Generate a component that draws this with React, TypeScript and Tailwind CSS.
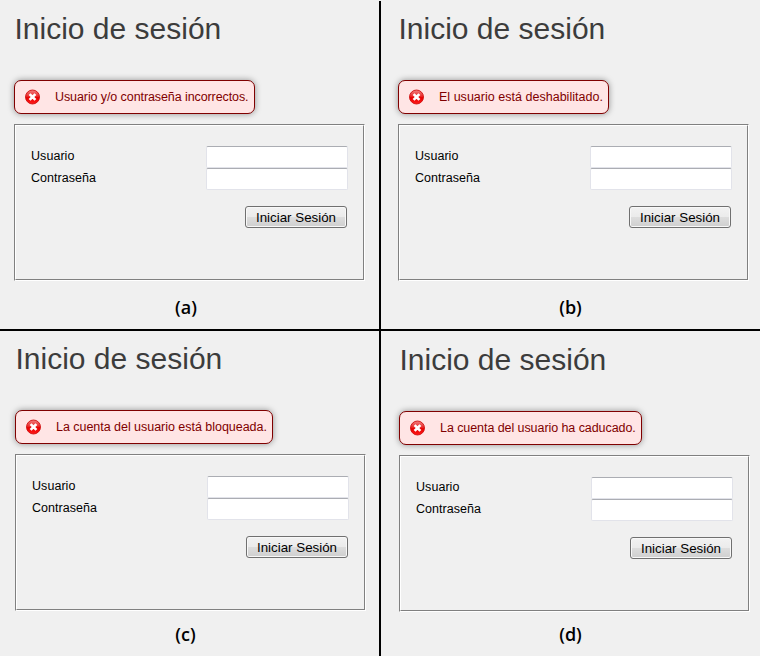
type PanelProps = {
  message: string;
  caption: string;
  alertWidth: string;
  spacing: string;
  offset: string;
  captionOffset: string;
};

function ErrorIcon() {
  return (
    <svg width="16" height="16" viewBox="0 0 16 16" className="shrink-0">
      <defs>
        <linearGradient id="ball" x1="0" y1="0" x2="0" y2="1">
          <stop offset="0" stopColor="#f08080" />
          <stop offset="0.45" stopColor="#ea2a2a" />
          <stop offset="0.55" stopColor="#e80000" />
          <stop offset="1" stopColor="#ff1c1c" />
        </linearGradient>
      </defs>
      <circle cx="7.5" cy="8" r="7" fill="url(#ball)" stroke="#d01010" strokeWidth="0.9" />
      <path d="M4.6 5.1l5.8 5.8M10.4 5.1l-5.8 5.8" stroke="#fff" strokeWidth="2.7" />
    </svg>
  );
}

function Field({ label }: { label: string }) {
  return (
    <label className="flex h-[22px] items-center justify-between text-[12.5px] leading-[22px] tracking-[0.05px] text-black">
      <span className="relative -top-px">{label}</span>
      <input
        aria-label={label}
        className="h-[22px] w-[142px] rounded-[2px] border border-[#e2e3ea] border-t-[#abadb3] bg-white px-1 outline-none"
      />
    </label>
  );
}

function LoginPanel({ message, caption, alertWidth, spacing, offset, captionOffset }: PanelProps) {
  return (
    <section className={`flex flex-col items-start ${offset}`}>
      <h1 className="h-[66px] pl-[0.5px] text-[30px] leading-[30px] text-[#3c3c3c]">Inicio de sesión</h1>
      <div
        className={`flex h-[34px] items-center rounded-[7px] border border-[#800000] bg-[#ffe5e5] pl-[10px] shadow-[0_0_6px_rgba(0,0,0,0.4)] ${alertWidth}`}
      >
        <ErrorIcon />
        <span className={`ml-[14px] text-[12.5px] leading-[16px] whitespace-nowrap text-[#800000] ${spacing}`}>{message}</span>
      </div>
      <form
        className="mt-[10px] flex h-[157px] w-[351px] flex-col border border-t-[#808080] border-l-[#808080] border-r-white border-b-white"
        onSubmit={(e) => e.preventDefault()}
      >
        <div className="flex-1 border border-t-white border-l-white border-r-[#808080] border-b-[#808080] pt-5 pr-[15px] pl-[15px]">
          <Field label="Usuario" />
          <Field label="Contraseña" />
          <div className="mt-4 flex justify-end pr-px">
            <button className="h-[22px] w-[102px] rounded-[3px] border border-[#707070] bg-[linear-gradient(#f2f2f2_0%,#ebebeb_49%,#dddddd_51%,#cfcfcf_100%)] pt-px text-[13.333px] leading-[19px] whitespace-nowrap text-black shadow-[inset_0_0_0_1px_#f8f8f8]">
              Iniciar Sesión
            </button>
          </div>
        </div>
      </form>
      <p className={`text-center font-['Open_Sans','Noto_Sans',sans-serif] text-[18px] leading-[20px] font-semibold text-black ${captionOffset}`}>
        {caption}
      </p>
    </section>
  );
}

export default function App() {
  return (
    <main className="grid h-[656px] w-[760px] grid-cols-[379px_2px_379px] grid-rows-[329px_2px_325px] overflow-hidden bg-[#f0f0f0] font-['Liberation_Sans',Arial,sans-serif]">
      <LoginPanel message="Usuario y/o contraseña incorrectos." caption="(a)" alertWidth="w-[241px]" spacing="tracking-[-0.09px]" offset="pt-[14px] pl-[14px]" captionOffset="mt-4 w-[344px]" />
      <div className="mt-px bg-black" />
      <LoginPanel message="El usuario está deshabilitado." caption="(b)" alertWidth="w-[211px]" spacing="tracking-[0.02px]" offset="pt-[14px] pl-[17px]" captionOffset="mt-4 w-[345px]" />
      <div className="col-span-3 bg-black" />
      <LoginPanel message="La cuenta del usuario está bloqueada." caption="(c)" alertWidth="w-[258px]" spacing="tracking-[-0.03px]" offset="pt-[13px] pl-[15px]" captionOffset="mt-[13px] w-[341px]" />
      <div className="bg-black" />
      <LoginPanel message="La cuenta del usuario ha caducado." caption="(d)" alertWidth="w-[243px]" spacing="tracking-[-0.07px]" offset="pt-[14px] pl-[18px]" captionOffset="mt-3 w-[343px]" />
    </main>
  );
}
